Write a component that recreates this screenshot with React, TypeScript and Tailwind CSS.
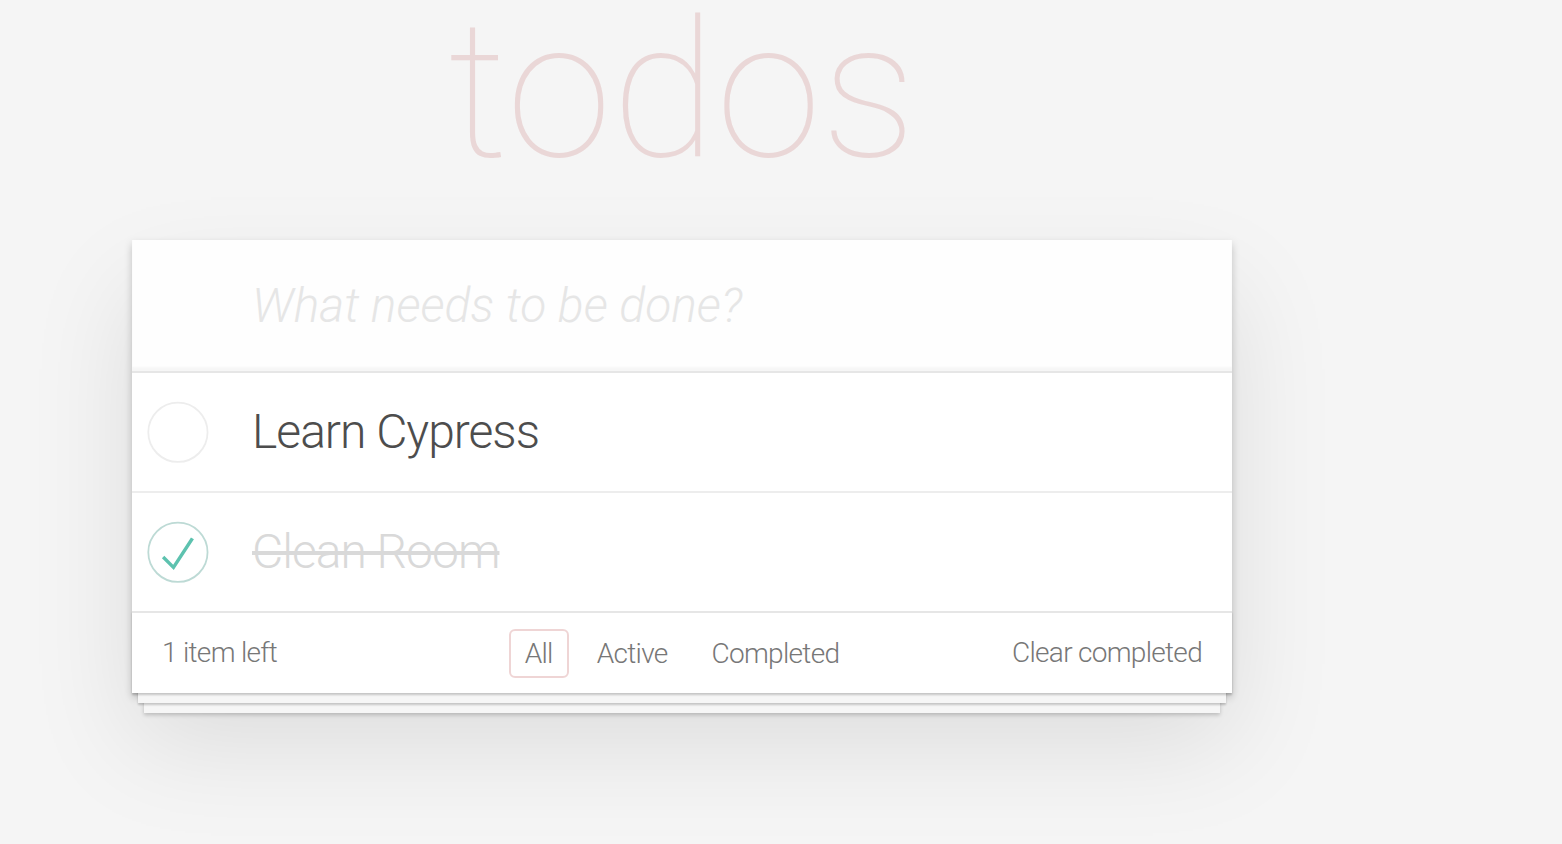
import React, { useState } from "react";

interface Todo {
  id: number;
  title: string;
  completed: boolean;
}

const Toggle: React.FC<{ checked: boolean }> = ({ checked }) => (
  <svg width="80" height="80" viewBox="-10 -18 100 135" className="shrink-0">
    <circle cx="50" cy="50" r="50" fill="none" stroke={checked ? "#bddad5" : "#ededed"} strokeWidth="3" />
    {checked && <path fill="#5dc2af" d="M72 25L42 71 27 56l-4 4 20 20 34-52z" />}
  </svg>
);

const App: React.FC = () => {
  const [todos] = useState<Todo[]>([
    { id: 1, title: "Learn Cypress", completed: false },
    { id: 2, title: "Clean Room", completed: true },
  ]);
  const left = todos.filter((t) => !t.completed).length;

  return (
    <div className="min-h-screen w-full overflow-hidden bg-[#f5f5f5] font-['Roboto','Helvetica_Neue',Arial,sans-serif] font-light text-[#4d4d4d]">
      <div className="ml-[132px] w-[1100px]">
        <h1 className="h-[240px] pt-[1px] text-center text-[191px] font-thin leading-[180px] text-[rgba(175,47,47,0.15)]">
          todos
        </h1>

        <section className="bg-white shadow-[0_4px_8px_0_rgba(0,0,0,0.2),0_50px_100px_0_rgba(0,0,0,0.1)]">
          <header className="flex h-[131px] items-center bg-[rgba(0,0,0,0.003)] pl-[120px] shadow-[inset_0_-4px_2px_rgba(0,0,0,0.03)]">
            <span className="text-[48px] italic text-[#e6e6e6]">What needs to be done?</span>
          </header>

          <ul className="border-t-2 border-[#e6e6e6]">
            {todos.map((todo, i) => (
              <li
                key={todo.id}
                className={
                  i === todos.length - 1
                    ? "flex h-[118px] items-center"
                    : "flex h-[120px] items-center border-b-2 border-[#ededed]"
                }
              >
                <Toggle checked={todo.completed} />
                <span
                  className={
                    todo.completed
                      ? "pl-[40px] text-[48px] leading-[58px] tracking-[-1px] text-[#d9d9d9] line-through"
                      : "pl-[40px] text-[48px] leading-[58px] tracking-[-1px]"
                  }
                >
                  {todo.title}
                </span>
              </li>
            ))}
          </ul>

          <footer className="grid h-[82px] grid-cols-[1fr_auto_1fr] items-center border-t-2 border-[#e6e6e6] px-[30px] text-[28px] tracking-[-0.7px] text-[#777] shadow-[0_2px_2px_rgba(0,0,0,0.2),0_16px_0_-6px_#f6f6f6,0_18px_2px_-6px_rgba(0,0,0,0.2),0_32px_0_-12px_#f6f6f6,0_34px_4px_-12px_rgba(0,0,0,0.2)]">
            <span className="justify-self-start">
              {left} item left
            </span>
            <ul className="flex items-center">
              <li className="m-[6px] rounded-[6px] border-2 border-[rgba(175,47,47,0.2)] px-[14px] py-[6px] leading-[33px]">All</li>
              <li className="m-[6px] rounded-[6px] border-2 border-transparent px-[14px] py-[6px] leading-[33px]">Active</li>
              <li className="m-[6px] rounded-[6px] border-2 border-transparent px-[14px] py-[6px] leading-[33px]">Completed</li>
            </ul>
            <span className="justify-self-end">Clear completed</span>
          </footer>
        </section>
      </div>
    </div>
  );
};

export default App;
